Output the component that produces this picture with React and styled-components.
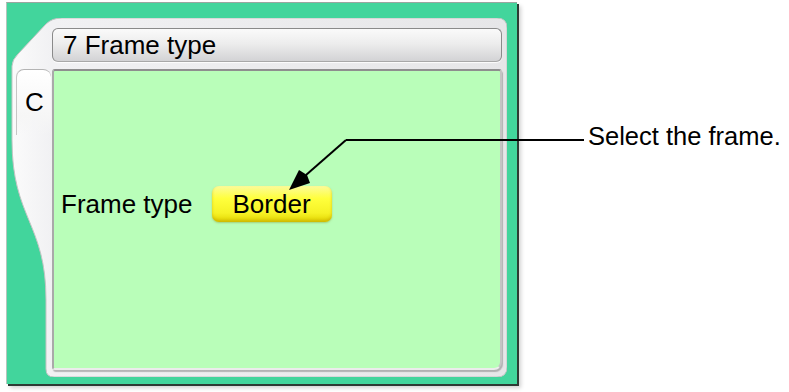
import React from 'react';
import styled, { createGlobalStyle } from 'styled-components';

const GlobalStyle = createGlobalStyle`
    html, body {
        margin: 0;
        padding: 0;
        background: #fff;
    }
    body {
        font-family: "Liberation Sans", Arial, sans-serif;
        color: #000;
    }
`;

const App = () => {
    return (
        <Page>
            <GlobalStyle />
            <Panel>
                <Frame>
                    <FrameShape viewBox="0 0 497 359" preserveAspectRatio="none">
                        <defs>
                            <linearGradient id="sideFill" x1="0" y1="0" x2="1" y2="0">
                                <stop offset="0" stopColor="#fbfbfb" />
                                <stop offset="0.08" stopColor="#f1f1f3" />
                                <stop offset="1" stopColor="#e6e6e8" />
                            </linearGradient>
                        </defs>
                        <path
                            d="M52 0 L487 0 Q497 0 497 10 L497 349 Q497 359 487 359 L44 359 Q36 359 36 351 L36 282 C36 205 2 200 2 122 L2 48 Q2 42 8 36 L36 6 Q42 0 52 0 Z"
                            fill="url(#sideFill)"
                            stroke="#c4c4c4"
                            strokeWidth="1"
                        />
                    </FrameShape>
                    <TitleBar>7 Frame type</TitleBar>
                    <Tab>C</Tab>
                    <Content>
                        <Row>
                            <Label>Frame type</Label>
                            <ValueButton>Border</ValueButton>
                        </Row>
                    </Content>
                </Frame>
            </Panel>
            <Callout>Select the frame.</Callout>
            <Pointer viewBox="0 0 789 392">
                <path d="M346 140 H584" stroke="#000" strokeWidth="2" fill="none" />
                <path d="M346 140 L306 175" stroke="#000" strokeWidth="2" fill="none" />
                <polygon points="289,190 299,170 307,175 310,183" fill="#000" />
            </Pointer>
        </Page>
    );
};

const Page = styled.div`
    position: relative;
    width: 789px;
    height: 392px;
    display: flex;
    align-items: flex-start;
    overflow: hidden;
`;

const Panel = styled.div`
    box-sizing: border-box;
    margin: 2px 0 0 6px;
    width: 511px;
    height: 382px;
    padding: 15px 0 0 3px;
    background: #42d59c;
    border-top: 1px solid #9aa6a0;
    border-left: 1px solid #b5c4bc;
    box-shadow: 2px 2px 0 #2e3a34, 4px 4px 4px rgba(0, 0, 0, 0.18);
`;

const Frame = styled.div`
    position: relative;
    box-sizing: border-box;
    width: 497px;
    height: 359px;
    padding: 10px 5px 7px 0;
    display: grid;
    grid-template-columns: 42px 450px;
    grid-template-rows: 34px 1fr;
    row-gap: 7px;
`;

const FrameShape = styled.svg`
    position: absolute;
    inset: 0;
    width: 100%;
    height: 100%;
    z-index: 0;
`;

const TitleBar = styled.div`
    position: relative;
    z-index: 1;
    grid-column: 2;
    grid-row: 1;
    box-sizing: border-box;
    display: flex;
    align-items: center;
    padding-left: 10px;
    font-size: 26px;
    border-radius: 6px;
    border: 1px solid #8a8a8a;
    border-bottom-color: #a8a8a8;
    background: linear-gradient(#fafafa 0%, #ededed 45%, #d3d3d5 100%);
    box-shadow: 0 1px 1px rgba(255, 255, 255, 0.9);
`;

const Tab = styled.div`
    position: relative;
    z-index: 1;
    grid-column: 1;
    grid-row: 2;
    align-self: start;
    box-sizing: border-box;
    margin-left: 6px;
    width: 35px;
    height: 66px;
    padding-left: 8px;
    display: flex;
    align-items: center;
    font-size: 26px;
    border-radius: 8px 8px 0 0;
    border-top: 1px solid #b4b4b4;
    border-left: 1px solid #c6c6c6;
    background: linear-gradient(#ffffff, #f6f6f6 70%, rgba(246, 246, 246, 0));
`;

const Content = styled.div`
    position: relative;
    z-index: 1;
    grid-column: 2;
    grid-row: 2;
    box-sizing: border-box;
    padding: 115px 0 0 7px;
    background: #b9feb9;
    border: 2px solid #c4c4c4;
    border-top-color: #8e8e8e;
    border-left-color: #a9a9a9;
    border-bottom-color: #ececec;
    border-radius: 3px 3px 8px 3px;
    box-shadow: 1px 2px 1px rgba(110, 110, 110, 0.45);
`;

const Row = styled.div`
    display: flex;
    align-items: center;
    gap: 19px;
    height: 36px;
`;

const Label = styled.span`
    font-size: 26px;
`;

const ValueButton = styled.div`
    box-sizing: border-box;
    height: 36px;
    padding: 0 21px;
    display: flex;
    align-items: center;
    font-size: 26px;
    border-radius: 7px;
    background: linear-gradient(#fbfb9a 0%, #ffff3c 35%, #f6f226 75%, #e2d400 100%);
    box-shadow: inset 0 -2px 3px rgba(190, 160, 0, 0.55), 0 1px 2px rgba(120, 120, 0, 0.35);
`;

const Callout = styled.div`
    margin: 121px 0 0 71px;
    font-size: 25.5px;
    line-height: 30px;
    white-space: nowrap;
`;

const Pointer = styled.svg`
    position: absolute;
    inset: 0;
    z-index: 5;
    width: 789px;
    height: 392px;
    pointer-events: none;
`;

export default App;
